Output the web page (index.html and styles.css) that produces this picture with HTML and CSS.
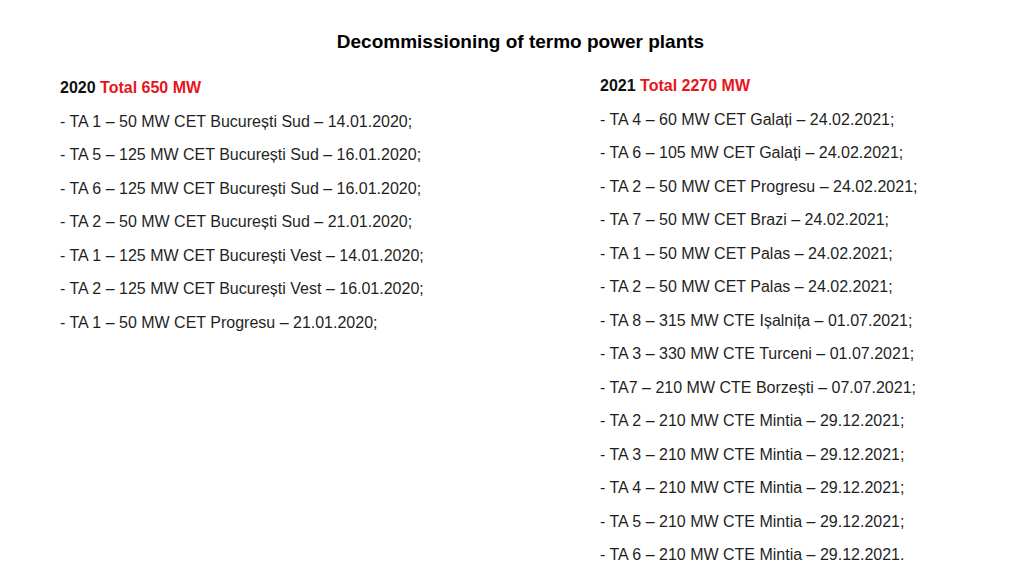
FILE: index.html
```html
<!DOCTYPE html>
<html>
<head>
<meta charset="utf-8">
<link rel="stylesheet" href="styles.css">
</head>
<body>
<div class="slide">
  <h1 class="title">Decommissioning of termo power plants</h1>
  <div class="columns">
    <div class="col col-left">
      <div class="heading">2020 <span class="red">Total 650 MW</span></div>
      <div class="item">- TA 1 – 50 MW CET București Sud – 14.01.2020;</div>
      <div class="item">- TA 5 – 125 MW CET București Sud – 16.01.2020;</div>
      <div class="item">- TA 6 – 125 MW CET București Sud – 16.01.2020;</div>
      <div class="item">- TA 2 – 50 MW CET București Sud – 21.01.2020;</div>
      <div class="item">- TA 1 – 125 MW CET București Vest – 14.01.2020;</div>
      <div class="item">- TA 2 – 125 MW CET București Vest – 16.01.2020;</div>
      <div class="item">- TA 1 – 50 MW CET Progresu – 21.01.2020;</div>
    </div>
    <div class="col col-right">
      <div class="heading">2021 <span class="red">Total 2270 MW</span></div>
      <div class="item">- TA 4 – 60 MW CET Galați – 24.02.2021;</div>
      <div class="item">- TA 6 – 105 MW CET Galați – 24.02.2021;</div>
      <div class="item">- TA 2 – 50 MW CET Progresu – 24.02.2021;</div>
      <div class="item">- TA 7 – 50 MW CET Brazi – 24.02.2021;</div>
      <div class="item">- TA 1 – 50 MW CET Palas – 24.02.2021;</div>
      <div class="item">- TA 2 – 50 MW CET Palas – 24.02.2021;</div>
      <div class="item">- TA 8 – 315 MW CTE Ișalnița – 01.07.2021;</div>
      <div class="item">- TA 3 – 330 MW CTE Turceni – 01.07.2021;</div>
      <div class="item">- TA7 – 210 MW CTE Borzești – 07.07.2021;</div>
      <div class="item">- TA 2 – 210 MW CTE Mintia – 29.12.2021;</div>
      <div class="item">- TA 3 – 210 MW CTE Mintia – 29.12.2021;</div>
      <div class="item">- TA 4 – 210 MW CTE Mintia – 29.12.2021;</div>
      <div class="item">- TA 5 – 210 MW CTE Mintia – 29.12.2021;</div>
      <div class="item">- TA 6 – 210 MW CTE Mintia – 29.12.2021.</div>
    </div>
  </div>
</div>
</body>
</html>
```
FILE: styles.css
```css
html, body {
  margin: 0;
  padding: 0;
  background: #ffffff;
}
body {
  font-family: "Liberation Sans", Arial, sans-serif;
  color: #1f1f1f;
}
.slide {
  width: 1024px;
  height: 576px;
  overflow: hidden;
  box-sizing: border-box;
  padding-top: 31px;
}
.title {
  margin: 0;
  font-size: 19px;
  font-weight: bold;
  line-height: 22px;
  text-align: center;
  color: #000;
  padding-left: 17px;
}
.columns {
  display: grid;
  grid-template-columns: 540px 1fr;
  padding-left: 60px;
  margin-top: 18px;
}
.col-right {
  margin-top: -2px;
}
.heading {
  font-weight: bold;
  font-size: 16px;
  line-height: 33.5px;
  color: #111;
}
.red {
  color: #e8141b;
}
.item {
  font-size: 16px;
  line-height: 33.5px;
}
```
